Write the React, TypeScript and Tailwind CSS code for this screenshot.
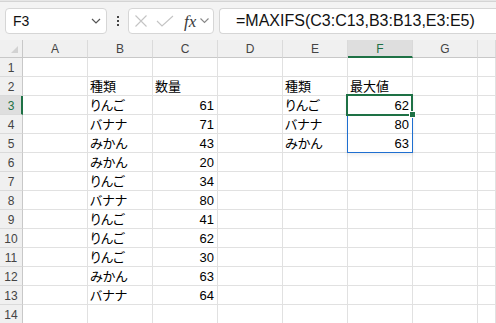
import React from "react"

const cols = ["A", "B", "C", "D", "E", "F", "G", ""]

const data: Record<number, string[]> = {
  2: ["", "種類", "数量", "", "種類", "最大値", "", ""],
  3: ["", "りんご", "61", "", "りんご", "62", "", ""],
  4: ["", "バナナ", "71", "", "バナナ", "80", "", ""],
  5: ["", "みかん", "43", "", "みかん", "63", "", ""],
  6: ["", "みかん", "20", "", "", "", "", ""],
  7: ["", "りんご", "34", "", "", "", "", ""],
  8: ["", "バナナ", "80", "", "", "", "", ""],
  9: ["", "りんご", "41", "", "", "", "", ""],
  10: ["", "りんご", "62", "", "", "", "", ""],
  11: ["", "りんご", "30", "", "", "", "", ""],
  12: ["", "みかん", "63", "", "", "", "", ""],
  13: ["", "バナナ", "64", "", "", "", "", ""],
}

const cellFont = {
  fontFamily: '"Liberation Sans", "Noto Sans CJK JP", sans-serif',
  fontFeatureSettings: '"palt"',
}

function FormulaBar() {
  return (
    <div className="flex h-[38px] items-start bg-[#f3f3f3] pt-[6px]">
      <div className="ml-[5px] flex h-[26px] w-[102px] items-center justify-between rounded-[4px] border border-[#d6d6d6] bg-white pl-[7px] pr-[5px]">
        <span className="text-[14px] text-[#111]" style={{ fontFamily: '"Liberation Sans", sans-serif' }}>
          F3
        </span>
        <svg width="10" height="6" viewBox="0 0 10 6" fill="none">
          <path d="M1 1l4 4 4-4" stroke="#555" strokeWidth="1.2" />
        </svg>
      </div>
      <div className="flex h-[26px] w-[21px] flex-col items-center justify-center gap-[2px]">
        <span className="h-[2px] w-[2px] bg-[#444]" />
        <span className="h-[2px] w-[2px] bg-[#444]" />
        <span className="h-[2px] w-[2px] bg-[#444]" />
      </div>
      <div className="flex h-[26px] w-[86px] items-center rounded-[4px] border border-[#d6d6d6] bg-white pl-[5px]">
        <svg width="14" height="12" viewBox="0 0 14 12" fill="none" className="ml-[0px]">
          <path d="M1.5 0.5l11 11M12.5 0.5l-11 11" stroke="#c4c4c4" strokeWidth="1.1" />
        </svg>
        <svg width="18" height="12" viewBox="0 0 18 12" fill="none" className="ml-[8px]">
          <path d="M1 6l5 5L17 1" stroke="#c4c4c4" strokeWidth="1.1" />
        </svg>
        <span
          className="ml-[10px] text-[17px] italic leading-none text-[#3a3a3a]"
          style={{ fontFamily: '"Liberation Serif", serif' }}
        >
          fx
        </span>
        <svg width="9" height="6" viewBox="0 0 9 6" fill="none" className="ml-[4px]">
          <path d="M0.5 0.5l4 4 4-4" stroke="#888" strokeWidth="1.1" />
        </svg>
      </div>
      <div className="ml-[5px] flex h-[26px] flex-1 items-center rounded-l-[4px] border border-r-0 border-[#d6d6d6] bg-white pl-[16px]">
        <span className="whitespace-nowrap text-[16px] text-[#111]" style={{ fontFamily: '"Liberation Sans", sans-serif' }}>
          =MAXIFS(C3:C13,B3:B13,E3:E5)
        </span>
      </div>
    </div>
  )
}

function Sheet() {
  const rowNums = Array.from({ length: 14 }, (_, i) => i + 1)
  return (
    <div
      className="grid grid-cols-[23px_repeat(7,65px)_1fr] grid-rows-[18px_repeat(14,19px)]"
      style={{ fontFamily: '"Liberation Sans", sans-serif' }}
    >
      <div className="relative border-b border-r border-[#c8c8c8] bg-[#f0f0f0]">
        <svg width="7" height="7" viewBox="0 0 7 7" className="absolute bottom-[4px] right-[4px]">
          <path d="M7 0V7H0Z" fill="#d2d2d2" />
        </svg>
      </div>
      {cols.map((c, i) =>
        c === "F" ? (
          <div
            key={i}
            className="flex items-center justify-center border-b-2 border-r border-b-[#1e7145] border-r-[#d9d9d9] bg-[#dedede] pt-[1px] text-[12px] text-[#1e7145]"
          >
            {c}
          </div>
        ) : (
          <div
            key={i}
            className="flex items-center justify-center border-b border-r border-b-[#c8c8c8] border-r-[#dadada] bg-[#f0f0f0] pt-[1px] text-[12px] text-[#444]"
          >
            {c}
          </div>
        )
      )}
      {rowNums.map((r) => (
        <React.Fragment key={r}>
          {r === 3 ? (
            <div className="flex items-center justify-center border-b border-r-2 border-b-[#dadada] border-r-[#1e7145] bg-[#dedede] pl-[1px] pt-[1px] text-[12px] text-[#1e7145]">
              {r}
            </div>
          ) : (
            <div className="flex items-center justify-center border-b border-r border-b-[#dadada] border-r-[#c8c8c8] bg-[#f0f0f0] pt-[1px] text-[12px] text-[#444]">
              {r}
            </div>
          )}
          {cols.map((_, ci) => {
            const v = data[r]?.[ci] ?? ""
            const num = /^\d+$/.test(v)
            return (
              <div
                key={ci}
                className={
                  "relative flex items-center whitespace-nowrap border-b border-r border-[#e1e1e1] bg-white pt-[2px] text-[13px] text-black " +
                  (num ? "justify-end pr-[3px]" : "justify-start pl-[2px]")
                }
                style={cellFont}
              >
                {r === 3 && ci === 5 && (
                  <>
                    <div className="pointer-events-none absolute left-[-1px] top-[-1px] z-10 h-[58px] w-[66px] border border-[#1f6fd0] shadow-[0_2px_4px_rgba(0,0,0,0.08)]" />
                    <div className="pointer-events-none absolute left-[-2px] top-[-2px] z-20 h-[22px] w-[67px] border-2 border-[#1e7145]" />
                    <div className="absolute left-[61px] top-[15px] z-30 h-[7px] w-[7px] border border-white bg-[#1e7145]" />
                  </>
                )}
                <span className="relative">{v}</span>
              </div>
            )
          })}
        </React.Fragment>
      ))}
    </div>
  )
}

export default function App() {
  return (
    <div className="h-[323px] w-[496px] overflow-hidden bg-white">
      <div className="h-[2px] border-b border-[#d4d4d4] bg-[#e6e6e6]" />
      <FormulaBar />
      <Sheet />
    </div>
  )
}
